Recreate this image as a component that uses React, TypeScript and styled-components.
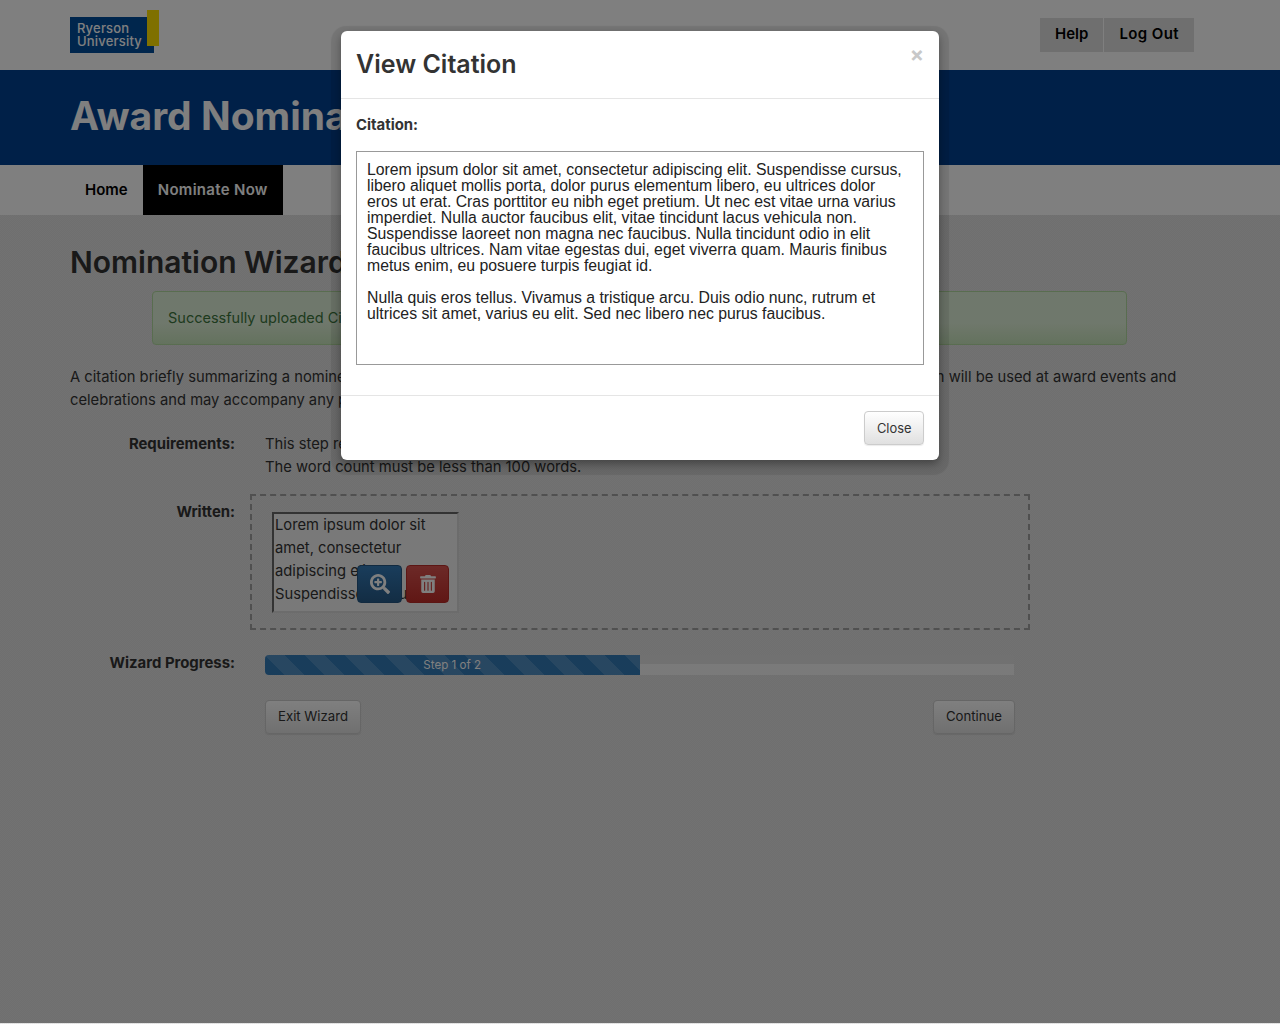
import * as React from 'react';
import styled, {createGlobalStyle} from 'styled-components';
import {FaSearchPlus, FaTrashAlt} from 'react-icons/fa';

const CITATION_FIRST =
    'Lorem ipsum dolor sit amet, consectetur adipiscing elit. Suspendisse cursus, libero aliquet mollis porta, dolor purus elementum libero, eu ultrices dolor eros ut erat. Cras porttitor eu nibh eget pretium. Ut nec est vitae urna varius imperdiet. Nulla auctor faucibus elit, vitae tincidunt lacus vehicula non. Suspendisse laoreet non magna nec faucibus. Nulla tincidunt odio in elit faucibus ultrices. Nam vitae egestas dui, eget viverra quam. Mauris finibus metus enim, eu posuere turpis feugiat id.';
const CITATION_SECOND =
    'Nulla quis eros tellus. Vivamus a tristique arcu. Duis odio nunc, rutrum et ultrices sit amet, varius eu elit. Sed nec libero nec purus faucibus.';

const GlobalStyle = createGlobalStyle`
    html, body {
        margin: 0;
        padding: 0;
    }
    body {
        min-height: 1024px;
        background: #e1e1e1;
        font-family: Inter, "Liberation Sans", sans-serif;
        font-size: 14.75px;
        color: #333333;
    }
`;

export default function App() {
    return (
        <Page>
            <GlobalStyle />
            <TopBar>
                <Logo>
                    <LogoText>
                        Ryerson
                        <br />
                        University
                    </LogoText>
                    <LogoTab />
                </Logo>
                <TopLinks>
                    <TopLink>Help</TopLink>
                    <TopLink $wide>Log Out</TopLink>
                </TopLinks>
            </TopBar>
            <Banner>
                <BannerTitle>Award Nominations</BannerTitle>
            </Banner>
            <Nav>
                <NavItem>Home</NavItem>
                <NavItem $active>Nominate Now</NavItem>
            </Nav>
            <Content>
                <PageTitle>Nomination Wizard</PageTitle>
                <Alert>Successfully uploaded Citation.</Alert>
                <Intro>
                    A citation briefly summarizing a nominee's achievements must be provided, for any and every award nomination. This citation will be used at award events and celebrations and may accompany any press materials.
                </Intro>
                <FormRow>
                    <FormLabel>Requirements:</FormLabel>
                    <FormValue>
                        This step requires a written citation.
                        <br />
                        The word count must be less than 100 words.
                    </FormValue>
                </FormRow>
                <FormRow $top={15}>
                    <FormLabel $pad={7}>Written:</FormLabel>
                    <DropZone>
                        <Preview>
                            <PreviewText>{CITATION_FIRST}</PreviewText>
                            <PreviewActions>
                                <IconButton $tone="blue">
                                    <FaSearchPlus size={20} />
                                </IconButton>
                                <IconButton $tone="red">
                                    <FaTrashAlt size={18} />
                                </IconButton>
                            </PreviewActions>
                        </Preview>
                    </DropZone>
                </FormRow>
                <FormRow $top={21}>
                    <FormLabel $pad={1}>Wizard Progress:</FormLabel>
                    <Progress>
                        <ProgressBar style={{width: '50%'}}>Step 1 of 2</ProgressBar>
                    </Progress>
                </FormRow>
                <WizardButtons>
                    <Button>Exit Wizard</Button>
                    <Button>Continue</Button>
                </WizardButtons>
            </Content>
            <Backdrop />
            <Modal>
                <ModalHeader>
                    <ModalTitle>View Citation</ModalTitle>
                    <CloseX>×</CloseX>
                </ModalHeader>
                <ModalBody>
                    <CitationLabel>Citation:</CitationLabel>
                    <CitationBox>
                        <p>{CITATION_FIRST}</p>
                        <p>{CITATION_SECOND}</p>
                    </CitationBox>
                </ModalBody>
                <ModalFooter>
                    <Button $compact>Close</Button>
                </ModalFooter>
            </Modal>
        </Page>
    );
}

const Page = styled.div`
    position: relative;
    height: 1024px;
    overflow: hidden;
    background: repeating-conic-gradient(#dedede 0 25%, #e4e4e4 0 50%) 0 0 / 2px 2px;
`;

const TopBar = styled.div`
    height: 70px;
    padding: 0 86px 0 70px;
    display: flex;
    justify-content: space-between;
    background: #ffffff;
`;

const Logo = styled.div`
    display: flex;
    align-items: flex-start;
    padding-top: 10px;
`;

const LogoText = styled.div`
    width: 84px;
    height: 36px;
    margin-top: 7px;
    padding: 5px 0 0 7px;
    box-sizing: border-box;
    background: #004c9b;
    color: #ffffff;
    font-size: 13px;
    font-weight: 500;
    line-height: 13px;
    letter-spacing: 0.2px;
`;

const LogoTab = styled.div`
    width: 12px;
    height: 36px;
    margin-left: -7px;
    background: #ffe000;
`;

const TopLinks = styled.div`
    display: flex;
    gap: 1px;
    padding-top: 18px;
`;

const TopLink = styled.div<{$wide?: boolean}>`
    height: 34px;
    padding: 0 15px 3px;
    box-sizing: border-box;
    display: flex;
    align-items: center;
    background: #dfdfdf;
    color: #000000;
    font-size: 15px;
    font-weight: 600;
    letter-spacing: ${p => (p.$wide ? 0.4 : 0)}px;
`;

const Banner = styled.div`
    height: 95px;
    padding: 0 70px 4px;
    box-sizing: border-box;
    display: flex;
    align-items: center;
    background: #004090;
`;

const BannerTitle = styled.h1`
    margin: 0;
    color: #ffffff;
    font-size: 39px;
    font-weight: 700;
`;

const Nav = styled.div`
    height: 50px;
    padding: 0 70px;
    display: flex;
    background: #ffffff;
`;

const NavItem = styled.div<{$active?: boolean}>`
    padding: 0 15px 1px;
    display: flex;
    align-items: center;
    background: ${p => (p.$active ? '#000000' : 'transparent')};
    color: ${p => (p.$active ? '#ffffff' : '#000000')};
    font-size: 15px;
    font-weight: 600;
    letter-spacing: ${p => (p.$active ? 0.3 : 0)}px;
`;

const Content = styled.div`
    padding: 29px 70px 0;
`;

const PageTitle = styled.h2`
    margin: 0;
    font-size: 30px;
    line-height: 36px;
    font-weight: 600;
`;

const Alert = styled.div`
    width: 975px;
    height: 54px;
    margin: 11px 0 0 82px;
    padding: 0 16px 1px 15px;
    box-sizing: border-box;
    display: flex;
    align-items: center;
    border: 1px solid #b2dba1;
    border-radius: 4px;
    background: linear-gradient(#dff0d8, #dff0d8 60%, #c8e5bc);
    color: #3c763d;
    font-size: 14.5px;
`;

const Intro = styled.p`
    margin: 21px 0 0;
    line-height: 23px;
`;

const FormRow = styled.div<{$top?: number}>`
    display: flex;
    margin-top: ${p => p.$top ?? 21}px;
`;

const FormLabel = styled.div<{$pad?: number}>`
    width: 165px;
    flex: none;
    padding-top: ${p => p.$pad ?? 0}px;
    text-align: right;
    font-size: 14.9px;
    font-weight: 700;
    line-height: 23px;
`;

const FormValue = styled.div`
    margin-left: 30px;
    line-height: 23px;
`;

const DropZone = styled.div`
    width: 780px;
    height: 136px;
    margin-left: 15px;
    padding: 16px 20px 15px;
    box-sizing: border-box;
    border: 2px dashed #a0a0a0;
`;

const Preview = styled.div`
    position: relative;
    width: 187px;
    height: 101px;
    box-sizing: border-box;
    padding: 0 1px;
    border: 2px solid;
    border-color: #666666 #d8d8d8 #d8d8d8 #666666;
    background: #f2f2f2;
    overflow: hidden;
`;

const PreviewText = styled.div`
    max-height: 92px;
    overflow: hidden;
    line-height: 23px;
    color: #333333;
`;

const PreviewActions = styled.div`
    position: absolute;
    right: 8px;
    bottom: 8px;
    display: flex;
    gap: 4px;
`;

const IconButton = styled.div<{$tone: 'blue' | 'red'}>`
    height: 38px;
    width: ${p => (p.$tone === 'blue' ? 45 : 43)}px;
    display: flex;
    align-items: center;
    justify-content: center;
    box-sizing: border-box;
    border-radius: 4px;
    color: #ffffff;
    background: ${p =>
        p.$tone === 'blue'
            ? 'linear-gradient(#337ab7, #265a88)'
            : 'linear-gradient(#d9534f, #c12e2a)'};
    border: 1px solid ${p => (p.$tone === 'blue' ? '#245580' : '#b92c28')};
`;

const Progress = styled.div`
    width: 749px;
    height: 20px;
    margin: 4px 0 0 30px;
    border-radius: 4px 0 0 4px;
    overflow: hidden;
    background: linear-gradient(#e2e2e2 45%, #f5f5f5 45%);
`;

const ProgressBar = styled.div`
    height: 100%;
    text-align: center;
    color: #ffffff;
    font-size: 11.6px;
    line-height: 20px;
    background-color: #337ab7;
    background-image: linear-gradient(
        45deg,
        rgba(255, 255, 255, 0.15) 25%,
        transparent 25%,
        transparent 50%,
        rgba(255, 255, 255, 0.15) 50%,
        rgba(255, 255, 255, 0.15) 75%,
        transparent 75%,
        transparent
    );
    background-size: 40px 40px;
`;

const WizardButtons = styled.div`
    width: 750px;
    margin: 25px 0 0 195px;
    display: flex;
    justify-content: space-between;
`;

const Button = styled.button<{$compact?: boolean}>`
    height: 34px;
    padding: 0 ${p => (p.$compact ? '11.5px 0' : '12px 2px')};
    border: 1px solid #cccccc;
    border-radius: 4px;
    background: linear-gradient(#ffffff, #e0e0e0);
    box-shadow: 0 1px 1px rgba(0, 0, 0, 0.08);
    color: #333333;
    font-family: inherit;
    font-size: ${p => (p.$compact ? 12.9 : 13.2)}px;
`;

const Backdrop = styled.div`
    position: absolute;
    inset: 0 0 1px;
    background: rgba(0, 0, 0, 0.5);
`;

const Modal = styled.div`
    position: absolute;
    left: 341px;
    top: 31px;
    width: 598px;
    background: #ffffff;
    border-radius: 6px;
    box-shadow: 0 4px 9px rgba(0, 0, 0, 0.35), 0 5px 1px 10px rgba(0, 0, 0, 0.08);
`;

const ModalHeader = styled.div`
    height: 65px;
    padding: 0 15px 2px;
    display: flex;
    align-items: center;
    justify-content: space-between;
    border-bottom: 1px solid #e5e5e5;
`;

const ModalTitle = styled.h3`
    margin: 0;
    font-size: 25px;
    font-weight: 600;
`;

const CloseX = styled.span`
    align-self: flex-start;
    margin-top: 11px;
    color: #c8c8c8;
    font-size: 21px;
    font-weight: 700;
`;

const ModalBody = styled.div`
    padding: 15px;
    height: 296px;
    box-sizing: border-box;
`;

const CitationLabel = styled.div`
    font-size: 14.9px;
    font-weight: 700;
    line-height: 23px;
`;

const CitationBox = styled.div`
    margin-top: 14px;
    height: 214px;
    box-sizing: border-box;
    padding: 10px 16px 10px 10px;
    border: 1px solid #999999;
    font-family: "Liberation Sans", Arial, sans-serif;
    font-size: 15.8px;
    line-height: 16px;
    color: #222222;

    p {
        margin: 0 0 16px;
    }
`;

const ModalFooter = styled.div`
    padding: 15px;
    display: flex;
    justify-content: flex-end;
    border-top: 1px solid #e5e5e5;
`;
